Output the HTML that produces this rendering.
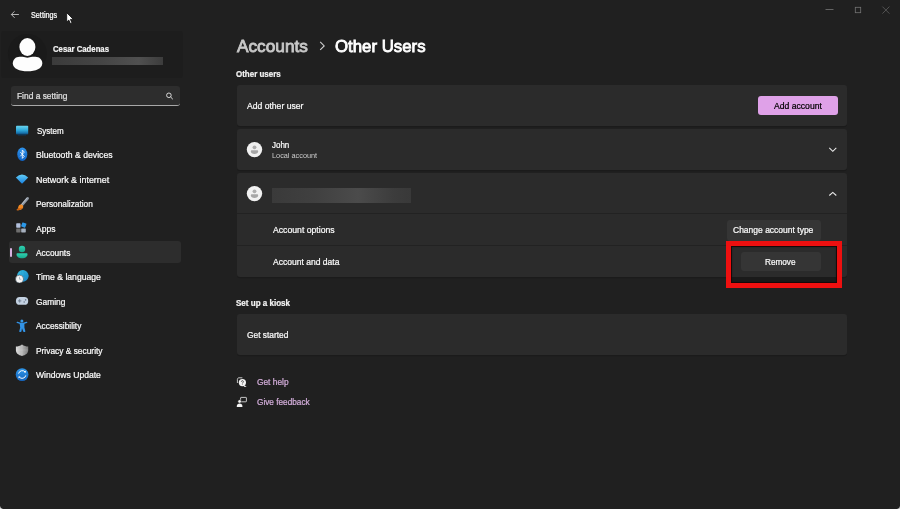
<!DOCTYPE html>
<html lang="en">
<head>
<meta charset="utf-8">
<title>Settings - Other Users</title>
<style>
*{box-sizing:border-box;margin:0;padding:0}
html,body{width:900px;height:509px;overflow:hidden;background:#202020}
body{font-family:"Liberation Sans",sans-serif;color:#fff;position:relative;font-size:9px}
.abs{position:absolute}
.t{position:absolute;white-space:nowrap;transform-origin:0 50%;-webkit-text-stroke:0.22px currentColor}
.tl{position:absolute;left:0;top:0;width:900px;height:509px;will-change:transform}
.card{position:absolute;left:237.200px;width:610px;background:#2b2b2b;border-radius:3px;box-shadow:0 1.300px 0 0 #1b1b1b}
</style>
</head>
<body>
<!-- profile box -->
<div class="abs" style="left:1px;top:31.300px;width:182px;height:46.700px;background:#1d1d1d;border-radius:3px"></div>
<!-- blurred email -->
<div class="abs" style="left:52px;top:57.3px;width:111.3px;height:7.6px;background:linear-gradient(90deg,#3b3b3b,#454545 45%,#505050 78%,#3c3c3c)"></div>
<!-- search -->
<div class="abs" style="left:10.7px;top:86.2px;width:169.3px;height:19.6px;background:#2d2d2d;border-radius:3px;border-bottom:1px solid #a8a8a8"></div>
<!-- nav selected -->
<div class="abs" style="left:8.700px;top:240.500px;width:172.200px;height:22.500px;background:#2d2d2d;border-radius:3px"></div>
<div class="abs" style="left:9.8px;top:247.7px;width:2.4px;height:9.3px;background:#d8b0df;border-radius:1.2px"></div>

<!-- cards -->
<div class="card" style="top:85px;height:41px"></div>
<div class="abs" style="left:757.8px;top:95.9px;width:80.5px;height:19.4px;background:#dfa1e8;border-radius:3px"></div>
<div class="card" style="top:128.800px;height:41.200px"></div>
<div class="card" style="top:172.800px;height:104px"></div>
<div class="abs" style="left:237px;top:213px;width:610.200px;height:1.200px;background:#222222"></div>
<div class="abs" style="left:237px;top:244.500px;width:610.200px;height:1.200px;background:#222222"></div>
<div class="abs" style="left:271.8px;top:188px;width:139.5px;height:15px;background:linear-gradient(90deg,#3a3a3a,#404040 30%,#4b4b4b 62%,#434343 76%,#3c3c3c 88%,#393939)"></div>
<div class="abs" style="left:726.5px;top:220px;width:94.2px;height:20.5px;background:#353535;border-radius:3px"></div>
<!-- red highlight: dark inner + border -->
<div class="abs" style="left:731px;top:277px;width:106px;height:5px;background:#1a1a1a"></div>
<div class="abs" style="left:741.2px;top:252.4px;width:79.5px;height:19px;background:#353535;border-radius:3px"></div>
<div class="abs" style="left:726.100px;top:240.700px;width:116.100px;height:47.500px;border:5.500px solid #ee1010;box-shadow:inset 0 0 0 1px rgba(22,6,6,0.850),inset 0 0 3px rgba(0,0,0,0.500)"></div>
<div class="card" style="top:313.800px;height:41.100px"></div>

<!-- all vector icons in page coordinates -->
<svg class="abs" style="left:0;top:0" width="900" height="509" viewBox="0 0 900 509">
<defs>
<linearGradient id="gSys" x1="0" y1="0" x2="0" y2="1"><stop offset="0" stop-color="#6ad4ee"/><stop offset="0.500" stop-color="#2fa9da"/><stop offset="0.780" stop-color="#1a7ab4"/><stop offset="1" stop-color="#0d4672"/></linearGradient>
<linearGradient id="gBt" x1="0" y1="0" x2="0" y2="1"><stop offset="0" stop-color="#2f95ee"/><stop offset="1" stop-color="#0f62c4"/></linearGradient>
<linearGradient id="gWifi" x1="0" y1="0" x2="0" y2="1"><stop offset="0" stop-color="#62cdf6"/><stop offset="1" stop-color="#1b84e2"/></linearGradient>
<linearGradient id="gGlobe" x1="0" y1="0" x2="1" y2="1"><stop offset="0" stop-color="#3cc4e4"/><stop offset="1" stop-color="#157fc4"/></linearGradient>
<linearGradient id="gShield" x1="0" y1="0" x2="1" y2="0"><stop offset="0" stop-color="#dcdcdc"/><stop offset="0.5" stop-color="#b4b4b4"/><stop offset="1" stop-color="#7c7c7c"/></linearGradient>
<linearGradient id="gUpd" x1="0" y1="0" x2="0" y2="1"><stop offset="0" stop-color="#2f97ea"/><stop offset="1" stop-color="#1464bd"/></linearGradient>
<linearGradient id="gAcc" x1="0" y1="0" x2="0" y2="1"><stop offset="0" stop-color="#2fd0b0"/><stop offset="1" stop-color="#17a98c"/></linearGradient>
</defs>

<!-- back arrow -->
<path d="M18.900 14.500H11.400M14.600 11.300L11.300 14.500l3.300 3.300" fill="none" stroke="#c4c4c4" stroke-width="0.900"/>
<!-- cursor -->
<path d="M66.700 12.700v9.300l2.100-1.900 1.600 3.500 1.600-0.700-1.600-3.500h3z" fill="#fff" stroke="#0a0a0a" stroke-width="0.8" stroke-linejoin="round"/>
<!-- window controls -->
<path d="M825.500 9.500h8" stroke="#6c6c6c" stroke-width="0.900"/>
<rect x="855.300" y="7.300" width="5.400" height="5.400" fill="none" stroke="#747474" stroke-width="0.800"/>
<path d="M882.400 6.600l7 7M889.400 6.600l-7 7" stroke="#606060" stroke-width="0.800"/>

<!-- big avatar -->
<circle cx="27.300" cy="53.300" r="19.400" fill="#1a1a1a"/>
<path d="M12.800 63.400C12.800 59.600 15.600 56.700 19.600 56.700H35.400C39.400 56.700 42.300 59.600 42.300 63.400C42.300 68.300 35.600 71.300 27.500 71.300C19.400 71.300 12.800 68.300 12.800 63.400Z" fill="#fdfdfd"/>
<ellipse cx="27.400" cy="47" rx="9.700" ry="10.700" fill="#191919"/>
<ellipse cx="27.400" cy="47" rx="8" ry="9" fill="#fdfdfd"/>
<!-- search icon -->
<circle cx="168.9" cy="95.3" r="2.3" fill="none" stroke="#e6e6e6" stroke-width="0.9"/>
<path d="M170.6 97l2.2 2.2" stroke="#e6e6e6" stroke-width="1"/>

<!-- System -->
<rect x="16" y="125.700" width="12.200" height="8.900" rx="0.800" fill="url(#gSys)"/>
<rect x="18" y="134.400" width="8" height="1" fill="#0b3d66"/>
<!-- Bluetooth -->
<ellipse cx="22.300" cy="154.200" rx="5" ry="6.700" fill="url(#gBt)"/>
<path d="M20.300 152.100l4 4.200-2 2.100v-8.400l2 2.100-4 4.200" fill="none" stroke="#fff" stroke-width="0.85" stroke-linejoin="round"/>
<!-- Network -->
<path d="M15.9 177.6Q22 171.4 28.2 177.6L22.6 183.2Q22 183.6 21.5 183.2Z" fill="url(#gWifi)"/>
<!-- Personalization -->
<path d="M27.6 198.4L21.2 206" stroke="#8e97a3" stroke-width="2.700" stroke-linecap="round"/>
<path d="M26.9 198.2L20.8 205.4" stroke="#c4cad2" stroke-width="0.8" stroke-linecap="round"/>
<path d="M21.6 204.6c1.2 0.6 1.8 1.6 1.6 2.6-0.5 2.4-4 3.6-6.8 2.8 1.6-0.8 1.6-2.4 2-3.6 0.4-1.4 1.8-2.4 3.2-1.8z" fill="#f08a24"/>
<path d="M16.4 210c1.2-0.4 1.8-1.2 2-2.2 1.2 1 3 0.6 4-0.2-1.2 2.4-3.6 3-6 2.4z" fill="#c85f10"/>
<!-- Apps -->
<rect x="16.200" y="223.300" width="4.300" height="4.400" rx="0.600" fill="#b2c0dc"/>
<rect x="16.2" y="228.4" width="4.4" height="4" rx="0.6" fill="#6e6e6e"/>
<rect x="21.2" y="228.4" width="4.6" height="4" rx="0.6" fill="#a6b0be"/>
<rect x="21.600" y="222.900" width="4.400" height="4.400" rx="0.600" fill="#2b98e8" transform="rotate(20 23.800 225.100)"/>
<!-- Accounts -->
<circle cx="22" cy="249" r="3.2" fill="url(#gAcc)"/>
<path d="M16.5 254.3c0-0.600 0.400-1 1-1h9c0.600 0 1 0.400 1 1 0 2.500-2.400 4-5.500 4s-5.500-1.500-5.500-4z" fill="url(#gAcc)"/>
<!-- Time & language -->
<circle cx="22.800" cy="275.900" r="5.800" fill="url(#gGlobe)"/>
<path d="M22.800 270.100c-2.600 2-2.600 9.600 0 11.600M22.800 270.100c2.600 2 2.600 9.600 0 11.600M17 275.900h11.600" fill="none" stroke="#1a9ad0" stroke-width="0.5"/>
<circle cx="19.500" cy="279.100" r="4" fill="#f4f4f4" stroke="#20303c" stroke-width="0.500"/>
<path d="M19.500 276.800v2.400h1.800" fill="none" stroke="#8090a0" stroke-width="0.600"/>
<!-- Gaming -->
<rect x="15.900" y="297" width="12.300" height="7.800" rx="3.900" fill="#c3d1e1"/>
<path d="M19.700 299.200v3.400M18 300.900h3.400" stroke="#6c7c90" stroke-width="0.900"/>
<circle cx="24.200" cy="302" r="0.800" fill="#6c7c90"/><circle cx="25.600" cy="299.900" r="0.800" fill="#6c7c90"/>
<!-- Accessibility -->
<circle cx="21.900" cy="320.900" r="1.500" fill="#3a9bea"/>
<path d="M17.300 322.400L20.600 323.400H23.400L26.600 322.400" fill="none" stroke="#3293e6" stroke-width="1.500" stroke-linecap="round" stroke-linejoin="round"/>
<path d="M19.600 323h4.800v4.600l0.900 3.400c0.200 0.700-0.200 1.100-0.800 1.100h-0.500c-0.500 0-0.800-0.300-0.900-0.800L22 328.200l-0.500 3.100c-0.100 0.500-0.400 0.800-0.900 0.800h-0.500c-0.600 0-1-0.400-0.800-1.100l0.900-3.400z" fill="#3293e6"/>
<!-- Privacy -->
<path d="M22 344.400c-2 1.500-4 2-6.100 2v3.800c0 3 2.700 4.900 6.100 5.700 3.500-0.800 6.200-2.700 6.200-5.700v-3.800c-2.200 0-4.200-0.500-6.200-2z" fill="url(#gShield)"/>
<path d="M22 344.400v11.500M15.900 350h12.300" stroke="#ffffff" stroke-opacity="0.25" stroke-width="0.500"/>
<!-- Windows Update -->
<circle cx="22.100" cy="374.600" r="6.400" fill="url(#gUpd)"/>
<path d="M18.600 373.600a3.800 3.800 0 0 1 6.600-1.600M25.800 375.400a3.800 3.800 0 0 1-6.600 1.600" fill="none" stroke="#fff" stroke-width="1"/>
<path d="M25.900 370.600v2h-2zM18.500 378.400v-2h2z" fill="#fff"/>

<!-- breadcrumb chevron -->
<path d="M320.200 41.900l4 4-4 4" fill="none" stroke="#cfcfcf" stroke-width="1.100"/>
<!-- expanders -->
<path d="M829.300 147.900l3.500 3.400 3.500-3.400" fill="none" stroke="#ececec" stroke-width="1.050"/>
<path d="M829.300 195.500l3.500-3.100 3.500 3.100" fill="none" stroke="#ececec" stroke-width="1.050"/>

<!-- small avatars -->
<g id="sa">
<circle cx="254.500" cy="149.600" r="7.700" fill="#f1f1f1"/>
<circle cx="254.500" cy="147.300" r="1.900" fill="#aeaeae"/>
<path d="M250.800 151.200c0-0.500 0.400-0.900 0.900-0.900h5.600c0.500 0 0.900 0.400 0.900 0.900 0 1.700-1.600 2.700-3.700 2.700s-3.700-1-3.700-2.700z" fill="#a6a6a6"/>
</g>
<use href="#sa" y="44"/>

<!-- get help icon -->
<path d="M237.400 383v-3.600c0-0.900 0.700-1.600 1.600-1.600h3.400" fill="none" stroke="#f0f0f0" stroke-width="0.800"/>
<circle cx="242.400" cy="382.600" r="3.600" fill="#f4f4f4"/>
<path d="M244.600 385.200l2 1.800-2.900-0.300z" fill="#f4f4f4"/>
<path d="M241.400 381.700c0-1.400 2-1.400 2 0 0 0.800-1 0.900-1 1.800M242.400 384.300v0.500" fill="none" stroke="#202020" stroke-width="0.700"/>
<!-- feedback icon -->
<rect x="240.600" y="397.400" width="5.800" height="4.400" rx="0.500" fill="none" stroke="#f0f0f0" stroke-width="0.800"/>
<circle cx="239.600" cy="401.400" r="1.700" fill="#f4f4f4" stroke="#202020" stroke-width="0.500"/>
<path d="M236.800 406.200c0-1.800 1.200-2.800 2.800-2.800s2.800 1 2.800 2.800v0.700h-5.600z" fill="#f4f4f4"/>
<!-- window corner slivers -->
<path d="M0 509V506Q0.300 508.700 3 509Z" fill="#d8d8d8"/>
<path d="M900 509V506Q899.700 508.700 897 509Z" fill="#c8c8c8"/>
</svg>

<!-- text -->
<div class="tl">
<div class="t" style="left:30.54px;top:10.00px;font-size:8.2px;line-height:11px;color:#ffffff;transform:scaleX(0.8862);">Settings</div>
<div class="t" style="left:53.41px;top:43.00px;font-size:8.5px;line-height:12px;color:#f4f4f4;font-weight:bold;transform:scaleX(0.9113);">Cesar Cadenas</div>
<div class="t" style="left:16.58px;top:90.00px;font-size:8.9px;line-height:12px;color:#e0e0e0;transform:scaleX(0.9448);">Find a setting</div>
<div class="t" style="left:36.50px;top:125.00px;font-size:8.4px;line-height:12px;color:#fafafa;transform:scaleX(0.9521);">System</div>
<div class="t" style="left:36.47px;top:149.00px;font-size:8.4px;line-height:12px;color:#fafafa;transform:scaleX(1.0343);">Bluetooth &amp; devices</div>
<div class="t" style="left:36.45px;top:174.00px;font-size:8.4px;line-height:12px;color:#fafafa;transform:scaleX(1.0624);">Network &amp; internet</div>
<div class="t" style="left:36.48px;top:198.00px;font-size:8.4px;line-height:12px;color:#fafafa;transform:scaleX(0.9925);">Personalization</div>
<div class="t" style="left:36.47px;top:223.00px;font-size:8.4px;line-height:12px;color:#fafafa;transform:scaleX(1.0190);">Apps</div>
<div class="t" style="left:36.48px;top:247.00px;font-size:8.4px;line-height:12px;color:#fafafa;transform:scaleX(0.9966);">Accounts</div>
<div class="t" style="left:36.47px;top:271.00px;font-size:8.4px;line-height:12px;color:#fafafa;transform:scaleX(1.0293);">Time &amp; language</div>
<div class="t" style="left:36.48px;top:296.00px;font-size:8.4px;line-height:12px;color:#fafafa;transform:scaleX(1.0004);">Gaming</div>
<div class="t" style="left:36.48px;top:320.00px;font-size:8.4px;line-height:12px;color:#fafafa;transform:scaleX(0.9940);">Accessibility</div>
<div class="t" style="left:36.48px;top:345.00px;font-size:8.4px;line-height:12px;color:#fafafa;transform:scaleX(0.9997);">Privacy &amp; security</div>
<div class="t" style="left:36.47px;top:369.00px;font-size:8.4px;line-height:12px;color:#fafafa;transform:scaleX(1.0245);">Windows Update</div>
<div class="t" style="left:237.34px;top:34.00px;font-size:17.4px;line-height:24px;color:#c8c8c8;-webkit-text-stroke:0.85px currentColor;transform:scaleX(0.9915);">Accounts</div>
<div class="t" style="left:335.06px;top:34.00px;font-size:17.4px;line-height:24px;color:#ffffff;-webkit-text-stroke:0.85px currentColor;transform:scaleX(0.9668);">Other Users</div>
<div class="t" style="left:236.30px;top:68.00px;font-size:8.6px;line-height:12px;color:#f4f4f4;font-weight:bold;transform:scaleX(0.9264);">Other users</div>
<div class="t" style="left:246.87px;top:100.00px;font-size:8.4px;line-height:12px;color:#fafafa;transform:scaleX(1.0259);">Add other user</div>
<div class="t" style="left:773.57px;top:100.00px;font-size:8.4px;line-height:12px;color:#000000;transform:scaleX(1.0279);">Add account</div>
<div class="t" style="left:272.40px;top:139.00px;font-size:8.4px;line-height:12px;color:#fafafa;transform:scaleX(0.9520);">John</div>
<div class="t" style="left:272.43px;top:151.00px;font-size:7.4px;line-height:10px;color:#cccccc;-webkit-text-stroke:0;transform:scaleX(0.9895);">Local account</div>
<div class="t" style="left:272.87px;top:224.00px;font-size:8.4px;line-height:12px;color:#fafafa;transform:scaleX(1.0346);">Account options</div>
<div class="t" style="left:732.57px;top:224.00px;font-size:8.4px;line-height:12px;color:#fafafa;transform:scaleX(1.0151);">Change account type</div>
<div class="t" style="left:272.87px;top:256.00px;font-size:8.4px;line-height:12px;color:#fafafa;transform:scaleX(1.0192);">Account and data</div>
<div class="t" style="left:765.29px;top:256.00px;font-size:8.4px;line-height:12px;color:#fafafa;transform:scaleX(0.9787);">Remove</div>
<div class="t" style="left:236.20px;top:297.00px;font-size:8.6px;line-height:12px;color:#f4f4f4;font-weight:bold;transform:scaleX(0.9344);">Set up a kiosk</div>
<div class="t" style="left:246.88px;top:329.00px;font-size:8.4px;line-height:12px;color:#fafafa;transform:scaleX(1.0001);">Get started</div>
<div class="t" style="left:256.58px;top:376.00px;font-size:8.4px;line-height:12px;color:#d4aedb;transform:scaleX(0.9957);">Get help</div>
<div class="t" style="left:256.59px;top:396.00px;font-size:8.4px;line-height:12px;color:#d4aedb;transform:scaleX(0.9828);">Give feedback</div>
</div>
</body>
</html>
